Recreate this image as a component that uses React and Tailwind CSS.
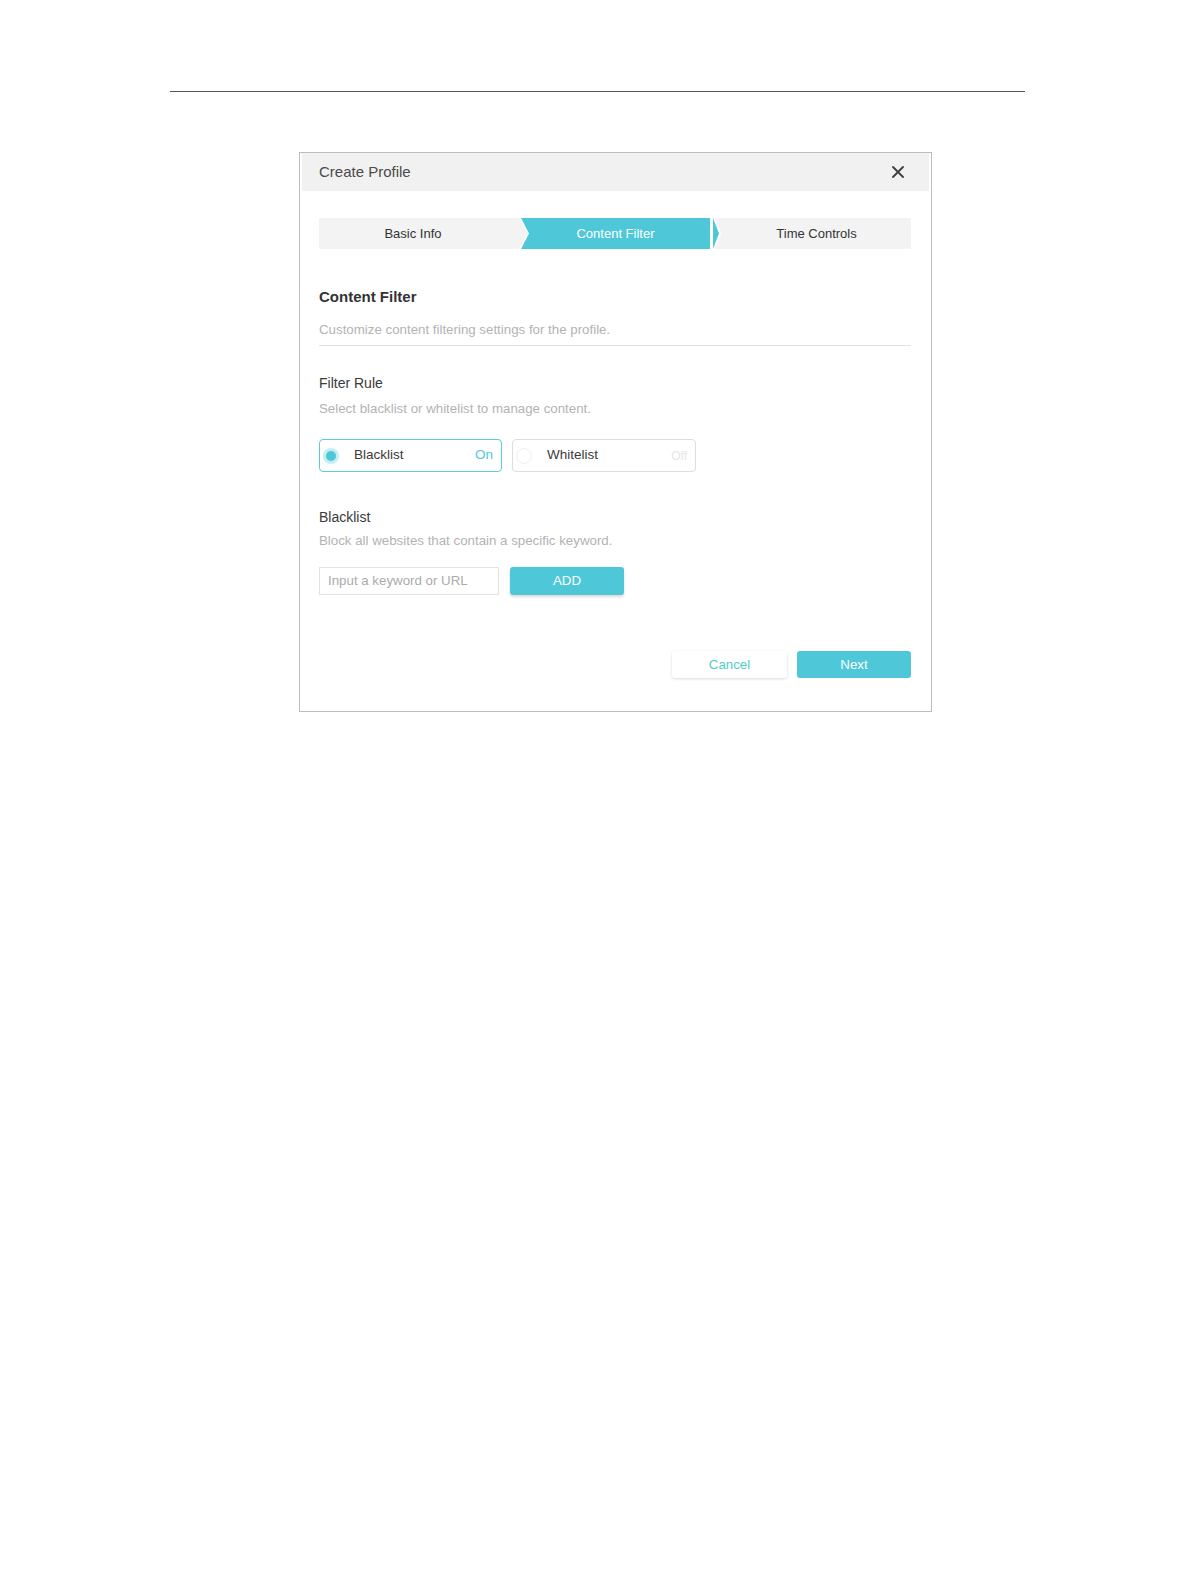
import React from "react";

const font = { fontFamily: '"Liberation Sans", Arial, sans-serif' };

export default function App() {
  return (
    <div className="w-[1196px] h-[1582px] bg-white" style={font}>
      <div className="pt-[91px]">
        <div className="ml-[170px] w-[855px] h-px bg-[#555555]" />
      </div>

      <div className="mt-[60px] ml-[299px] w-[633px] h-[560px] border border-[#bdbdbd] bg-white flex flex-col">
        {/* Header */}
        <div className="mx-[2px] h-[38px] bg-[#f1f1f1] flex items-center justify-between pl-[17px] pr-[25px]">
          <span className="text-[15px] text-[#4a4a4a]">Create Profile</span>
          <svg width="12" height="12" viewBox="0 0 12 12">
            <path d="M1 1 L11 11 M11 1 L1 11" stroke="#3d3d3d" strokeWidth="1.8" strokeLinecap="round" />
          </svg>
        </div>

        <div className="pl-[19px] pr-[20px] flex flex-col">
          {/* Steps */}
          <div className="mt-[27px] h-[31px] flex text-[13px]">
            <div className="w-[208px] h-full bg-[#f3f3f3] flex items-center justify-center pr-[20px] text-[#333333] [clip-path:polygon(0_0,calc(100%-8px)_0,100%_50%,calc(100%-8px)_100%,0_100%)]">
              Basic Info
            </div>
            <div className="ml-[-6px] w-[189px] h-full bg-[#4ec8d8] flex items-center justify-center text-white [clip-path:polygon(0_0,100%_0,100%_100%,0_100%,8px_50%)]">
              Content Filter
            </div>
            <div className="ml-[3px] w-[6px] h-full bg-[#4ec8d8] [clip-path:polygon(0_0,100%_50%,0_100%)]" />
            <div className="ml-[-4px] flex-1 h-full bg-[#f3f3f3] flex items-center justify-center pl-[7px] text-[#333333] [clip-path:polygon(0_0,100%_0,100%_100%,0_100%,6px_50%)]">
              Time Controls
            </div>
          </div>

          {/* Content Filter */}
          <div className="mt-[38px] text-[15px] leading-[20px] font-bold text-[#333333]">Content Filter</div>
          <div className="mt-[13px] text-[13.3px] leading-[20px] text-[#b3b3b3]">
            Customize content filtering settings for the profile.
          </div>
          <div className="mt-[5px] h-px bg-[#e2e2e2]" />

          {/* Filter Rule */}
          <div className="mt-[27px] text-[14px] leading-[20px] text-[#3a3a3a]">Filter Rule</div>
          <div className="mt-[6px] text-[13.3px] leading-[20px] text-[#b3b3b3]">
            Select blacklist or whitelist to manage content.
          </div>

          <div className="mt-[20px] flex gap-[10px]">
            <div className="w-[183px] h-[33px] rounded-[4px] border border-[#5ccdd8] flex items-center pl-[3px] pr-[8px]">
              <span className="w-[16px] h-[16px] rounded-full bg-[#c4eef1] flex items-center justify-center">
                <span className="w-[10px] h-[10px] rounded-full bg-[#4ec8d8]" />
              </span>
              <span className="ml-[15px] text-[13.5px] text-[#3a3a3a]">Blacklist</span>
              <span className="ml-auto text-[13.5px] text-[#4ec8d8]">On</span>
            </div>
            <div className="w-[184px] h-[33px] rounded-[4px] border border-[#dedede] flex items-center pl-[3px] pr-[8px]">
              <span className="w-[16px] h-[16px] rounded-full border border-[#f0f0f0]" />
              <span className="ml-[15px] text-[13.5px] text-[#3a3a3a]">Whitelist</span>
              <span className="ml-auto text-[12px] text-[#e6e6e6]">Off</span>
            </div>
          </div>

          {/* Blacklist */}
          <div className="mt-[35px] text-[14px] leading-[20px] text-[#3a3a3a]">Blacklist</div>
          <div className="mt-[4px] text-[13.3px] leading-[20px] text-[#b3b3b3]">
            Block all websites that contain a specific keyword.
          </div>

          <div className="mt-[16px] flex gap-[11px]">
            <div className="w-[180px] h-[28px] border border-[#e3e3e3] flex items-center pl-[8px] text-[13.3px] text-[#ababab]">
              Input a keyword or URL
            </div>
            <div className="w-[114px] h-[28px] rounded-[3px] bg-[#4ec8d8] shadow-[0_2px_3px_rgba(0,0,0,0.15)] flex items-center justify-center text-[13.3px] text-white">
              ADD
            </div>
          </div>

          {/* Buttons */}
          <div className="mt-[56px] flex justify-end gap-[10px]">
            <div className="w-[115px] h-[27px] rounded-[3px] bg-white shadow-[0_1px_3px_rgba(0,0,0,0.15)] flex items-center justify-center text-[13.3px] text-[#4fcfc3]">
              Cancel
            </div>
            <div className="w-[114px] h-[27px] rounded-[3px] bg-[#4ec8d8] flex items-center justify-center text-[13.3px] text-white">
              Next
            </div>
          </div>
        </div>
      </div>
    </div>
  );
}
